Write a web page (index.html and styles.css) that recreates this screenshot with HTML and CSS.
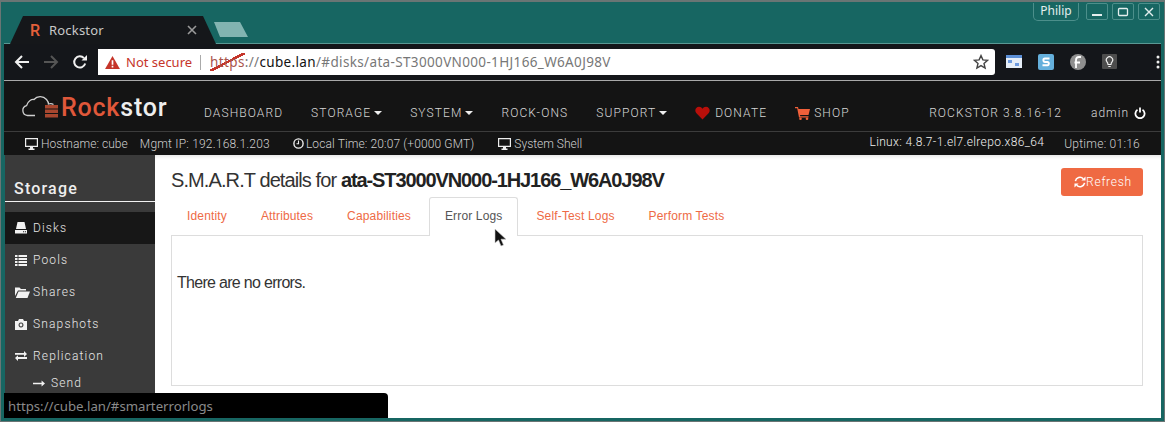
FILE: index.html
```html
<!DOCTYPE html>
<html lang="en">
<head>
<meta charset="utf-8">
<title>Rockstor</title>
<link rel="stylesheet" href="styles.css">
</head>
<body>
<div class="window">
  <header class="tabstrip">
    <div class="tab">
      <span class="tab-r">R</span>
      <span class="tab-title">Rockstor</span>
      <svg class="tab-x" width="10" height="10" viewBox="0 0 10 10"><path d="M1 1l8 8M9 1l-8 8" stroke="#9a9a9a" stroke-width="1.6"/></svg>
    </div>
    <div class="newtab"></div>
    <div class="wm">
      <div class="wm-user">Philip</div>
      <div class="wm-btn"><svg width="12" height="12" viewBox="0 0 12 12"><path d="M1 9h10" stroke="#e4eeee" stroke-width="2"/></svg></div>
      <div class="wm-btn"><svg width="12" height="12" viewBox="0 0 12 12"><rect x="1.500" y="2.500" width="9" height="7" rx="1" fill="none" stroke="#e4eeee" stroke-width="1.300"/></svg></div>
      <div class="wm-btn"><svg width="12" height="12" viewBox="0 0 12 12"><path d="M2 2l8 8M10 2l-8 8" stroke="#e4eeee" stroke-width="1.400"/></svg></div>
    </div>
  </header>

  <div class="toolbar">
    <svg class="tb-ico" width="16" height="16" viewBox="0 0 16 16"><path d="M15 8H3M8 2L2 8l6 6" fill="none" stroke="#f0f0f0" stroke-width="2"/></svg>
    <svg class="tb-ico" width="16" height="16" viewBox="0 0 16 16"><path d="M1 8h12M8 2l6 6-6 6" fill="none" stroke="#555" stroke-width="2"/></svg>
    <svg class="tb-ico" width="16" height="16" viewBox="0 0 16 16"><path d="M13.200 9.500A5.600 5.600 0 1 1 12 4.200" fill="none" stroke="#f0f0f0" stroke-width="2"/><path d="M9.500 6.500H15V1z" fill="#f0f0f0"/></svg>
    <div class="omnibox">
      <svg class="warn" width="15" height="13" viewBox="0 0 16 14"><path d="M8 0l8 14H0z" fill="#c5352a"/><path d="M7.100 4.500h1.800v5H7.100zM7.100 10.500h1.800v1.800H7.100z" fill="#fff"/></svg>
      <span class="notsec">Not secure</span>
      <span class="sep"></span>
      <span class="url"><span class="https">https</span><span class="dim">://</span><span class="host">cube.lan</span><span class="dim">/#disks/ata-ST3000VN000-1HJ166_W6A0J98V</span></span>
      <svg class="star" width="16" height="16" viewBox="0 0 16 16"><path d="M8 1.600l1.900 4.300 4.700.4-3.600 3.100 1.100 4.600L8 11.600 3.900 14l1.100-4.600-3.600-3.100 4.700-.4z" fill="none" stroke="#444" stroke-width="1.400"/></svg>
    </div>
    <div class="exts">
      <svg width="16" height="14" viewBox="0 0 16 14"><rect width="16" height="13" fill="#e6eef8"/><rect width="16" height="3" fill="#5c8fd6"/><rect x="2" y="5" width="4" height="3" fill="#6d9be0"/><rect x="9" y="8" width="4" height="3" fill="#6d9be0"/></svg>
      <svg width="16" height="16" viewBox="0 0 16 16"><rect width="16" height="16" rx="2" fill="#65b0dc"/><path d="M11.500 4.600H6.800q-1.400 0-1.400 1.600t1.400 1.700h2.600q1.400 0 1.400 1.700t-1.400 1.600H4.500" fill="none" stroke="#fff" stroke-width="2"/></svg>
      <svg width="16" height="16" viewBox="0 0 16 16"><circle cx="8" cy="8" r="8" fill="#8f8f8f"/><path d="M6 14V6q0-3 3-3h2M4.500 8.500H10" fill="none" stroke="#fff" stroke-width="1.800"/></svg>
      <svg width="16" height="16" viewBox="0 0 16 16"><rect width="15" height="15" rx="1" fill="#4d4d4d"/><path d="M6 10.500q0-1.500-1-2.500a3.200 3.200 0 1 1 5 0q-1 1-1 2.500zM6.300 12.500h2.400" fill="none" stroke="#f0f0f0" stroke-width="1.100"/></svg>
      <svg class="dots" width="4" height="14" viewBox="0 0 4 14"><circle cx="2" cy="2" r="1.500" fill="#eee"/><circle cx="2" cy="7" r="1.500" fill="#eee"/><circle cx="2" cy="12" r="1.500" fill="#eee"/></svg>
    </div>
  </div>

  <nav class="navbar">
    <div class="logo">
      <svg width="40" height="24" viewBox="0 0 40 24"><path d="M14 20.500H6.500a5 5 0 0 1-1-9.800C7 5.500 11 4 13 4.500c3-3.500 9-4 12.500 0 1.500 1.800 2 3 2 4.500 1.500-.5 3.500-.5 5 .5" fill="none" stroke="#cfcfcf" stroke-width="1.300"/><g fill="#a8472f"><rect x="24" y="10" width="13" height="3.500"/><rect x="24" y="14.500" width="13" height="3.500"/><rect x="24" y="19" width="13" height="3.500"/></g></svg>
      <span class="logo-text"><span class="logo-red">Rock</span>stor</span>
    </div>
    <a class="nav-item">DASHBOARD</a>
    <a class="nav-item">STORAGE<i class="caret"></i></a>
    <a class="nav-item">SYSTEM<i class="caret"></i></a>
    <a class="nav-item">ROCK-ONS</a>
    <a class="nav-item">SUPPORT<i class="caret"></i></a>
    <a class="nav-item"><svg class="nav-ico" width="15" height="14" viewBox="0 0 15 14"><path d="M7.500 13.500L1.200 7C-.8 4.500.8.800 4 .8c1.500 0 2.800.8 3.500 2C8.200 1.600 9.500.8 11 .8c3.200 0 4.800 3.700 2.800 6.200z" fill="#b80f0a"/></svg>DONATE</a>
    <a class="nav-item"><svg class="nav-ico nav-cart" width="15" height="13" viewBox="0 0 15 13"><path d="M0 0h3l.5 2H15l-1.500 6H5l.3 1.300h8.200v1.200H4L2.200 1.300H0z" fill="#f0603a"/><circle cx="5.500" cy="11.700" r="1.300" fill="#f0603a"/><circle cx="12" cy="11.700" r="1.300" fill="#f0603a"/></svg>SHOP</a>
    <span class="nav-version">ROCKSTOR 3.8.16-12</span>
    <span class="nav-admin">admin<svg width="12" height="12" viewBox="0 0 12 12"><path d="M3.500 2.800a4.600 4.600 0 1 0 5 0" fill="none" stroke="#fff" stroke-width="1.800"/><path d="M6 .5v5" stroke="#fff" stroke-width="1.800"/></svg></span>
  </nav>

  <div class="subbar">
    <span class="sub sub-host"><svg width="13" height="12" viewBox="0 0 13 12"><path d="M0 0h13v9H8v1.500h1.500V12h-6v-1.500H5V9H0zM1.200 1.200v6.600h10.600V1.200z" fill="#eee" fill-rule="evenodd"/></svg>Hostname: cube</span>
    <span class="sub sub-ip">Mgmt IP: 192.168.1.203</span>
    <span class="sub sub-time"><svg width="11" height="11" viewBox="0 0 11 11"><circle cx="5.500" cy="5.500" r="4.600" fill="none" stroke="#eee" stroke-width="1.400"/><path d="M5.500 2.500v3.200H3.500" fill="none" stroke="#eee" stroke-width="1.100"/></svg>Local Time: 20:07 (+0000 GMT)</span>
    <span class="sub sub-shell"><svg width="13" height="12" viewBox="0 0 13 12"><path d="M0 0h13v9H8v1.500h1.500V12h-6v-1.500H5V9H0zM1.200 1.200v6.600h10.600V1.200z" fill="#eee" fill-rule="evenodd"/></svg>System Shell</span>
    <span class="sub sub-linux">Linux: 4.8.7-1.el7.elrepo.x86_64</span>
    <span class="sub sub-up">Uptime: 01:16</span>
  </div>

  <div class="main">
    <aside class="sidebar">
      <h2 class="side-title">Storage</h2>
      <a class="side-item is-active"><svg width="12" height="12" viewBox="0 0 12 12"><path d="M2.500 0h7L11 7H1z" fill="#f2f2f2"/><path d="M0 8h12v3.500H0z" fill="#f2f2f2"/><path d="M8 9.300h1.200v1H8zM10 9.300h1v1h-1z" fill="#222"/></svg>Disks</a>
      <a class="side-item"><svg width="12" height="12" viewBox="0 0 12 12"><path d="M0 1h2.500v2H0zM3.500 1H12v2H3.500zM0 4h2.500v2H0zM3.500 4H12v2H3.500zM0 7h2.500v2H0zM3.500 7H12v2H3.500zM0 10h2.500v2H0zM3.500 10H12v2H3.500z" fill="#f2f2f2"/></svg>Pools</a>
      <a class="side-item"><svg width="15" height="12" viewBox="0 0 15 12"><path d="M0 10V1.500h4.500L6 3h5v1.500H3L0 10z" fill="#f2f2f2"/><path d="M3.500 5.500H15L12.500 12H.8z" fill="#f2f2f2"/></svg>Shares</a>
      <a class="side-item"><svg width="12" height="11" viewBox="0 0 12 11"><path d="M0 2h3l1-2h4l1 2h3v9H0zM6 3.500a2.500 2.500 0 1 0 .01 0z" fill="#f2f2f2" fill-rule="evenodd"/><circle cx="6" cy="6" r="1.400" fill="#f2f2f2"/></svg>Snapshots</a>
      <a class="side-item"><svg width="12" height="10" viewBox="0 0 12 10"><path d="M0 2h9V0l3 3-3 3V3.800H0zM12 6H3V4.200L0 7l3 3V8h9z" fill="#f2f2f2"/></svg>Replication</a>
      <a class="side-sub"><svg width="12" height="7" viewBox="0 0 14 7"><path d="M0 2.700h10V0l4 3.500L10 7V4.300H0z" fill="#f2f2f2"/></svg>Send</a>
    </aside>
    <section class="content">
      <div class="head">
        <h1 class="title">S.M.A.R.T details for <b>ata-ST3000VN000-1HJ166_W6A0J98V</b></h1>
        <button class="refresh"><svg width="12" height="12" viewBox="0 0 13 13"><path d="M1.500 5.500A5 5 0 0 1 10 3M11.500 7.500A5 5 0 0 1 3 10" fill="none" stroke="#fff" stroke-width="1.700"/><path d="M12.500 .5v4.500H8zM.5 12.500V8H5z" fill="#fff"/></svg>Refresh</button>
      </div>
      <ul class="tabs">
        <li class="t">Identity</li>
        <li class="t">Attributes</li>
        <li class="t">Capabilities</li>
        <li class="t t-active">Error Logs</li>
        <li class="t">Self-Test Logs</li>
        <li class="t">Perform Tests</li>
      </ul>
      <div class="panel">
        <p class="msg">There are no errors.</p>
      </div>
      <svg class="cursor" width="13" height="19" viewBox="0 0 13 19"><path d="M1 1v14l3.500-3 2.500 6 2.500-1-2.500-5.800H12z" fill="#111" stroke="#ccc" stroke-width=".6"/></svg>
    </section>
  </div>
  <div class="status">https://cube.lan/#smarterrorlogs</div>
</div>
</body>
</html>
```
FILE: styles.css
```css
* { box-sizing: border-box; }
html, body { margin: 0; padding: 0; }
body { width: 1165px; height: 422px; overflow: hidden; background: #176662; font-family: "Roboto", "Liberation Sans", sans-serif; }
a { color: inherit; text-decoration: none; }

.window { position: relative; width: 1165px; height: 422px; display: flex; flex-direction: column; background: #176662; border: 1px solid #6a7574; border-top-width: 2px; padding: 0 3px 3px 3px; overflow: hidden; }

.tabstrip { height: 42px; flex: none; display: flex; align-items: flex-end; position: relative; border-bottom: 1px solid #5a9894; }
.tab { width: 206px; height: 28px; margin-left: 6px; margin-bottom: -1px; flex: none; display: flex; align-items: center; padding: 0 19px 0 20px; background: #15171a; clip-path: polygon(0 100%, 13px 0, 193px 0, 206px 100%); font-family: "Noto Sans", sans-serif; font-size: 13px; color: #c8c8c8; }
.tab-r { color: #e4603a; font-family: "Roboto", sans-serif; font-weight: 500; font-size: 16px; width: 19px; }
.tab-title { flex: 1; letter-spacing: .2px; }
.newtab { width: 34px; height: 15px; margin: 0 0 6px -2px; background: #82b4b1; clip-path: polygon(0 0, 26px 0, 34px 100%, 6px 100%); flex: none; }
.wm { position: absolute; top: 1px; right: 1px; display: flex; gap: 4px; align-items: flex-start; }
.wm-user { width: 46px; height: 18px; margin-right: 3px; border: 1px solid #4c8f8b; border-top: 0; border-radius: 0 0 5px 5px; color: #e4eeee; font-family: "Noto Sans", sans-serif; font-size: 12px; text-align: center; line-height: 15px; }
.wm-btn { width: 22px; height: 17px; border: 1px solid #4c8f8b; border-radius: 2px; display: flex; align-items: center; justify-content: center; }

.toolbar { height: 37px; flex: none; display: flex; align-items: center; background: #14161a; padding: 0 0 0 3px; border-bottom: 1px solid #a9a9a9; }
.tb-ico { flex: none; margin: 0 6px 0 7px; }
.omnibox { width: 897px; height: 26px; margin-left: 4px; display: flex; align-items: center; background: #fff; border-radius: 0 3px 3px 0; padding: 0 6px 0 7px; font-family: "Noto Sans", sans-serif; font-size: 13.500px; flex: none; }
.warn { flex: none; }
.notsec { color: #c5352a; margin-left: 6px; font-size: 13px; }
.sep { width: 1px; height: 15px; background: #aaa; margin: 0 9px 0 8px; }
.url { flex: 1; white-space: nowrap; letter-spacing: .35px; }
.https { color: #a9544c; background: linear-gradient(to bottom right, transparent 46%, #c5352a 46%, #c5352a 54%, transparent 54%); }
.dim { color: #777; }
.host { color: #111; }
.star { flex: none; }
.exts { flex: 1; display: flex; align-items: center; gap: 16px; padding-left: 11px; }
.exts .dots { margin-left: 22px; }

.navbar { height: 51px; flex: none; display: flex; align-items: center; background: #141414; border-bottom: 1px solid #3c3c3c; color: #d6d6d6; font-size: 12px; font-weight: 300; letter-spacing: 1.100px; padding: 14px 15px 0 17px; }
.logo { width: 183px; display: flex; align-items: center; flex: none; margin-top: -12px; }
.logo svg { flex: none; }
.logo-text { font-size: 25px; font-weight: 500; letter-spacing: .8px; color: #eee; }
.logo-red { color: #e0583a; }
.nav-item { display: flex; align-items: center; margin-right: 28px; white-space: nowrap; }
.nav-ico { margin-right: 5px; }
.nav-cart { margin-right: 4px; }
.caret { display: inline-block; margin-left: 3px; border: 4px solid transparent; border-top-color: #eee; border-bottom: 0; }
.nav-version { margin-left: auto; }
.nav-admin { display: flex; align-items: center; gap: 5px; margin-left: 29px; letter-spacing: 1px; }

.subbar { height: 23px; flex: none; display: flex; align-items: center; background: #141414; color: #cfcfcf; font-size: 12px; font-weight: 300; padding-left: 21px; white-space: nowrap; }
.sub { display: flex; align-items: center; gap: 3px; letter-spacing: .25px; }
.sub-host { letter-spacing: .05px; }
.sub-ip { margin-left: 12px; letter-spacing: .2px; }
.sub-time { margin-left: 23px; gap: 2px; letter-spacing: .12px; }
.sub-shell { margin-left: 24px; letter-spacing: 0; }
.sub-linux { margin-left: auto; color: #f0f0f0; margin-top: -3px; letter-spacing: .35px; }
.sub-up { margin: 0 21px 0 20px; }

.main { flex: 1; min-height: 0; display: flex; background: #fff; }
.sidebar { width: 151px; flex: none; background: #3a3a3a; border-left: 1px solid #176662; color: #e8e8e8; font-size: 12px; font-weight: 300; letter-spacing: 1.150px; padding-top: 21px; overflow: hidden; }
.side-title { margin: 0 0 10px; height: 26px; padding: 1px 0 0 9px; border-bottom: 1px solid #f2f2f2; font-size: 16px; font-weight: 500; letter-spacing: 1.200px; line-height: 24px; color: #eee; }
.side-item { display: grid; grid-template-columns: 18px 1fr; align-items: center; height: 32px; padding-left: 10px; }
.is-active { background: #171717; }
.side-sub { display: grid; grid-template-columns: 18px 1fr; align-items: center; height: 22px; padding-left: 28px; }

.content { position: relative; flex: 1; padding: 13px 18px 0 16px; box-shadow: inset 0 4px 4px -3px #ddd; }
.head { display: flex; justify-content: space-between; align-items: flex-start; height: 29px; }
.title { margin: 0; font-family: "Liberation Sans", sans-serif; font-size: 20px; font-weight: 400; letter-spacing: -.9px; color: #333; line-height: 24px; }
.title b { font-weight: 700; color: #222; letter-spacing: -1.100px; }
.refresh { width: 82px; height: 28px; border: 0; padding: 0 0 0 2px; background: #ef6a43; border-radius: 3px; color: #fff; font-family: "Roboto", sans-serif; font-weight: 300; font-size: 12px; letter-spacing: .75px; display: flex; align-items: center; justify-content: center; }
.tabs { list-style: none; margin: 0; padding: 0; display: flex; gap: 2px; height: 39px; }
.t { padding: 0 15px; height: 39px; line-height: 36px; color: #ee6a45; font-family: "Liberation Sans", sans-serif; font-size: 12px; letter-spacing: .15px; border: 1px solid transparent; border-bottom: 0; }
.t-active { color: #555; background: #fff; border-color: #ddd; border-radius: 3px 3px 0 0; position: relative; z-index: 1; }
.panel { height: 151px; border: 1px solid #ddd; margin-top: -1px; padding: 37px 5px 0; }
.msg { margin: 0; font-family: "Liberation Sans", sans-serif; font-size: 16px; letter-spacing: -.7px; color: #333; line-height: 20px; }
.cursor { position: absolute; left: 339px; top: 73px; z-index: 2; }

.status { position: absolute; left: 3px; bottom: 3px; width: 384px; height: 25px; background: #000; border-radius: 0 4px 0 0; color: #8a8a8a; font-family: "Noto Sans", sans-serif; font-size: 13.200px; line-height: 26px; padding-left: 4px; z-index: 3; }
```
